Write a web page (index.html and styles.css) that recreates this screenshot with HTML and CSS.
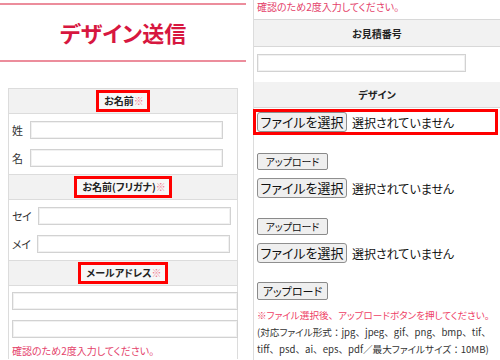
FILE: index.html
```html
<!DOCTYPE html>
<html lang="ja">
<head>
<meta charset="utf-8">
<title>デザイン送信</title>
<link rel="stylesheet" href="styles.css">
</head>
<body>
<div class="page">
  <section class="panel panel-left">
    <h1 class="title">デザイン送信</h1>
    <div class="table">
      <div class="th"><span class="hl">お名前<span class="req">※</span></span></div>
      <div class="td rows">
        <div class="row"><span class="lbl">姓</span><input class="inp inp-name" type="text"></div>
        <div class="row"><span class="lbl">名</span><input class="inp inp-name" type="text"></div>
      </div>
      <div class="th"><span class="hl">お名前(フリガナ)<span class="req">※</span></span></div>
      <div class="td rows">
        <div class="row"><span class="lbl">セイ</span><input class="inp inp-name" type="text"></div>
        <div class="row"><span class="lbl">メイ</span><input class="inp inp-name" type="text"></div>
      </div>
      <div class="th"><span class="hl">メールアドレス<span class="req">※</span></span></div>
      <div class="td rows mail">
        <input class="inp inp-mail" type="text">
        <input class="inp inp-mail" type="text">
        <p class="note">確認のため2度入力してください。</p>
      </div>
    </div>
  </section>
  <section class="panel panel-right">
    <p class="note note-top">確認のため2度入力してください。</p>
    <div class="th th-r">お見積番号</div>
    <div class="td td-est"><input class="inp inp-est" type="text"></div>
    <div class="th th-r">デザイン</div>
    <div class="td files">
      <div class="file file-hl"><span class="fbtn">ファイルを選択</span><span class="ftext">選択されていません</span></div>
      <span class="ubtn ubtn-1">アップロード</span>
      <div class="file"><span class="fbtn">ファイルを選択</span><span class="ftext">選択されていません</span></div>
      <span class="ubtn ubtn-2">アップロード</span>
      <div class="file"><span class="fbtn">ファイルを選択</span><span class="ftext">選択されていません</span></div>
      <span class="ubtn ubtn-3">アップロード</span>
      <p class="warn">※ファイル選択後<span class="fw">、</span>アップロードボタンを押してください<span class="fw">。</span></p>
      <p class="fmt">(対応ファイル形式<span class="fw">：</span>jpg<span class="fw">、</span>jpeg<span class="fw">、</span>gif<span class="fw">、</span>png<span class="fw">、</span>bmp<span class="fw">、</span>tif<span class="fw">、</span><br>tiff<span class="fw">、</span>psd<span class="fw">、</span>ai<span class="fw">、</span>eps<span class="fw">、</span>pdf／最大ファイルサイズ<span class="fw">：</span>10MB)</p>
    </div>
  </section>
</div>
</body>
</html>
```

FILE: styles.css
```css
* { box-sizing: border-box; }
html, body { margin: 0; padding: 0; background: #fff; }
body {
  width: 500px;
  height: 360px;
  overflow: hidden;
  font-family: "Noto Sans CJK JP", "Noto Sans", sans-serif;
  color: #333;
  font-feature-settings: "palt";
}
p { margin: 0; }
.page {
  display: flex;
  gap: 7px;
  height: 360px;
}
.panel-left { width: 246px; flex: none; }
.title {
  margin: 3px 0 0;
  height: 59px;
  border-top: 2px solid #ec8d9c;
  border-bottom: 2px solid #ec8d9c;
  font-size: 22px;
  line-height: 55px;
  font-weight: 700;
  text-align: center;
  color: #d7173f;
}
.table {
  margin: 26px 0 0 8px;
  width: 230px;
  border: 1px solid #dcdcdc;
  border-bottom: none;
}
.th {
  background: #f2f2f2;
  padding: 1px 0;
  height: 26px;
  border-bottom: 1px solid #dcdcdc;
  display: flex;
  justify-content: center;
  align-items: flex-start;
  font-size: 10px;
  font-weight: 700;
  color: #222;
}
.table .th { height: 25px; }
.hl {
  display: block;
  border: 3px solid #ff0000;
  height: 22px;
  line-height: 16px;
  padding: 0 3px 0 5px;
  background: #f7f7f7;
}
.req { color: #f07a90; font-weight: 400; }
.td { background: #fff; }
.rows {
  padding: 7px 0 7px 3px;
  display: flex;
  flex-direction: column;
  gap: 10px;
  border-bottom: 1px solid #dcdcdc;
}
.row { display: flex; align-items: center; height: 18px; }
.lbl {
  font-size: 11px;
  margin-right: 7px;
  letter-spacing: -0.5px;
  color: #333;
}
.inp {
  display: block;
  margin: 0;
  padding: 0;
  height: 18px;
  border: 1px solid #d2d2d2;
  background: #fff;
  box-shadow: inset 0 0 0 1px #f1f1f1;
  outline: none;
}
.inp-name { width: 193px; }
.mail { padding: 6px 0 0 3px; border-bottom: none; }
.inp-mail { width: 226px; }
.note {
  font-size: 10px;
  line-height: 16px;
  color: #e4416a;
  margin-top: -5px;
}
.panel-right {
  width: 247px;
  flex: none;
  border-left: 1px solid #dcdcdc;
}
.note-top {
  margin: 0;
  padding-left: 3px;
  height: 19px;
  line-height: 14px;
}
.th-r {
  height: 28px;
  border-top: 1px solid #d8d8d8;
  border-bottom: 1px solid #d8d8d8;
  align-items: center;
  padding: 0;
}
.td-est { padding: 7px 0 9px 3px; height: 35px; }
.inp-est { width: 209px; }
.th-r + .td-est + .th-r { height: 26px; border-top: none; }
.files { padding: 1px 0 0 3px; display: flex; flex-direction: column; align-items: flex-start; }
.file {
  display: flex;
  align-items: center;
  height: 20px;
  margin-top: 8px;
}
.file-hl {
  margin: 0 0 0 -4px;
  width: 245px;
  height: 26px;
  border: 3px solid #ff0000;
  padding-left: 1px;
}
.fbtn {
  display: block;
  width: 90px;
  height: 20px;
  border: 1px solid #8f8f8f;
  border-radius: 3px;
  background: #efefef;
  font-size: 13px;
  line-height: 18px;
  text-align: center;
  color: #111;
}
.ftext {
  font-size: 12px;
  margin-left: 5px;
  color: #111;
}
.ubtn {
  display: block;
  width: 71px;
  height: 17px;
  border: 1px solid #8a8a8a;
  border-radius: 2px;
  background: #efefef;
  font-size: 10px;
  line-height: 15px;
  text-align: center;
  color: #111;
}
.ubtn-1 { margin-top: 18px; }
.ubtn-2 { margin-top: 20px; }
.ubtn-3 { margin-top: 19px; height: 18px; line-height: 16px; font-size: 11px; }
.fw { font-feature-settings: normal; }
.warn {
  margin-top: 7px;
  font-size: 9.6px;
  line-height: 17px;
  color: #ee3f66;
  white-space: nowrap;
}
.fmt {
  font-size: 9.6px;
  line-height: 17px;
  color: #333;
  white-space: nowrap;
}
```
